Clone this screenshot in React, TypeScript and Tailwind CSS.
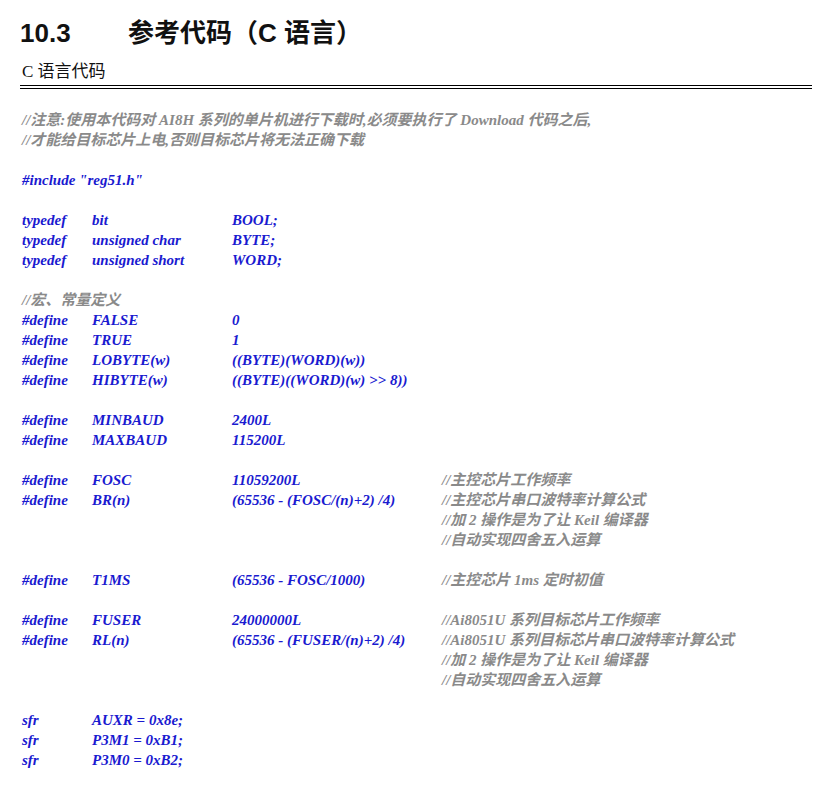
const B = "text-[#1a1ad0]";
const G = "text-[#8a8a8a]";
type Row = [string?, string?, string?, string?, boolean?];
const rows: Row[] = [
  ["//注意:使用本代码对 AI8H 系列的单片机进行下载时,必须要执行了 Download 代码之后,", , , , true],
  ["//才能给目标芯片上电,否则目标芯片将无法正确下载", , , , true],
  [],
  ['#include "reg51.h"'],
  [],
  ["typedef", "bit", "BOOL;"],
  ["typedef", "unsigned char", "BYTE;"],
  ["typedef", "unsigned short", "WORD;"],
  [],
  ["//宏、常量定义", , , , true],
  ["#define", "FALSE", "0"],
  ["#define", "TRUE", "1"],
  ["#define", "LOBYTE(w)", "((BYTE)(WORD)(w))"],
  ["#define", "HIBYTE(w)", "((BYTE)((WORD)(w) >> 8))"],
  [],
  ["#define", "MINBAUD", "2400L"],
  ["#define", "MAXBAUD", "115200L"],
  [],
  ["#define", "FOSC", "11059200L", "//主控芯片工作频率"],
  ["#define", "BR(n)", "(65536 - (FOSC/(n)+2) /4)", "//主控芯片串口波特率计算公式"],
  [, , , "//加 2 操作是为了让 Keil 编译器"],
  [, , , "//自动实现四舍五入运算"],
  [],
  ["#define", "T1MS", "(65536 - FOSC/1000)", "//主控芯片 1ms 定时初值"],
  [],
  ["#define", "FUSER", "24000000L", "//Ai8051U 系列目标芯片工作频率"],
  ["#define", "RL(n)", "(65536 - (FUSER/(n)+2) /4)", "//Ai8051U 系列目标芯片串口波特率计算公式"],
  [, , , "//加 2 操作是为了让 Keil 编译器"],
  [, , , "//自动实现四舍五入运算"],
  [],
  ["sfr", "AUXR = 0x8e;"],
  ["sfr", "P3M1 = 0xB1;"],
  ["sfr", "P3M0 = 0xB2;"],
];

export default function App() {
  return (
    <div className="w-[821px] h-[789px] bg-white overflow-hidden" style={{ fontFamily: '"Liberation Serif", "Noto Sans CJK SC", serif' }}>
      <div className="pl-[20px] pt-[16px] flex items-center h-[50px] text-[26px] font-bold text-[#111]" style={{ fontFamily: '"Liberation Sans", "Noto Sans CJK SC", sans-serif' }}>
        <span className="w-[108px]">10.3</span>
        <span>参考代码（C 语言）</span>
      </div>
      <div className="pl-[22px] mt-[11px] text-[17px] leading-[22px] text-[#111]">C 语言代码</div>
      <div className="ml-[20px] mr-[9px] mt-[2px] border-t border-b border-black h-[4px]" />
      <div className="mt-[21px] pl-[22px] text-[15px] leading-[20px] font-bold italic">
        {rows.map((r, i) => {
          if (r[4]) return <div key={i} className={`h-[20px] whitespace-nowrap ${G}`}>{r[0]}</div>;
          if (r.length === 1) return <div key={i} className={`h-[20px] ${B}`}>{r[0]}</div>;
          return (
            <div key={i} className="h-[20px] flex whitespace-nowrap">
              <span className={`w-[70px] ${B}`}>{r[0] ?? ""}</span>
              <span className={`w-[140px] ${B}`}>{r[1] ?? ""}</span>
              <span className={`w-[210px] ${B}`}>{r[2] ?? ""}</span>
              <span className={G}>{r[3] ?? ""}</span>
            </div>
          );
        })}
      </div>
    </div>
  );
}
